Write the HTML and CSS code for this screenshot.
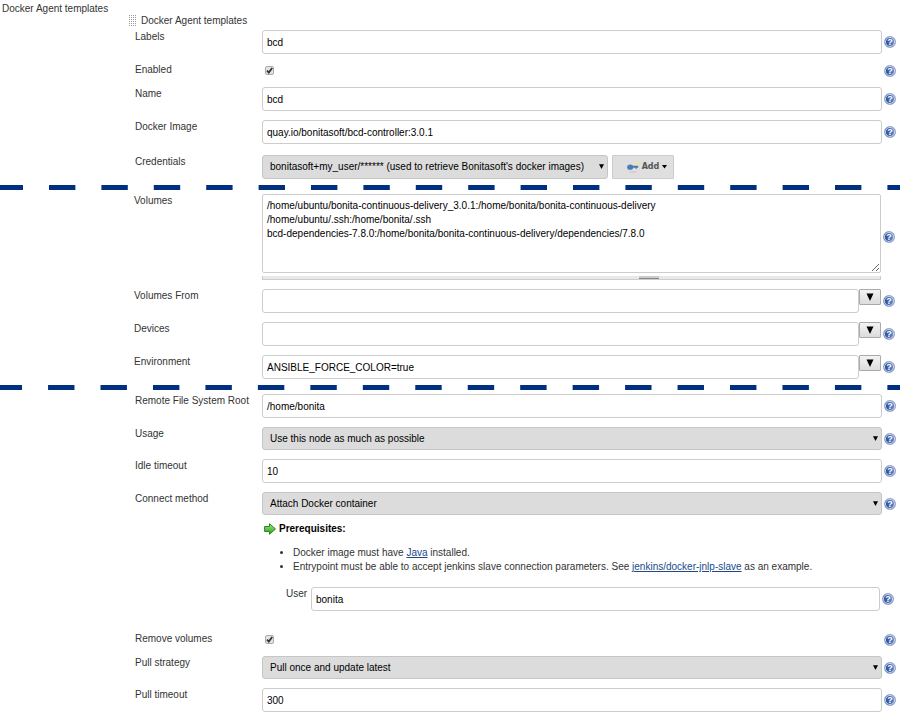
FILE: index.html
```html
<!DOCTYPE html>
<html lang="en">
<head>
<meta charset="utf-8">
<title>Docker Agent templates</title>
<link rel="stylesheet" href="styles.css">
</head>
<body>
<svg class="defs" aria-hidden="true">
  <defs>
    <linearGradient id="green" x1="0" y1="0" x2="0" y2="1"><stop offset="0" stop-color="#a5e67f"/><stop offset="1" stop-color="#2c9b22"/></linearGradient>
  </defs>
  <symbol id="tick" viewBox="0 0 9 9"><path d="M2 4.6 3.8 6.6 7.2 2" fill="none" stroke="#333" stroke-width="1.8"/></symbol>
  <symbol id="arrow" viewBox="0 0 5 5"><path d="M0 0.3H5L2.5 5Z" fill="#000"/></symbol>
  <symbol id="dashes" viewBox="0 0 9000 50" preserveAspectRatio="none"><path d="M0 25H9000" stroke="#00307f" stroke-width="50" stroke-dasharray="264 260" stroke-dashoffset="34"/></symbol>
</svg>

<form class="config">
  <div class="section-name">Docker Agent templates</div>
  <h1 class="template-name"><span class="drag"></span>Docker Agent templates</h1>

  <section class="group">
    <div class="row">
      <label for="labels">Labels</label>
      <input class="text" id="labels" type="text" value="bcd">
      <a class="help" href="#" aria-label="Help">?</a>
    </div>
    <div class="row">
      <label for="enabled">Enabled</label>
      <span class="check"><input id="enabled" type="checkbox" checked><svg><use href="#tick"/></svg></span>
      <a class="help" href="#" aria-label="Help">?</a>
    </div>
    <div class="row">
      <label for="name">Name</label>
      <input class="text" id="name" type="text" value="bcd">
      <a class="help" href="#" aria-label="Help">?</a>
    </div>
    <div class="row">
      <label for="image">Docker Image</label>
      <input class="text" id="image" type="text" value="quay.io/bonitasoft/bcd-controller:3.0.1">
      <a class="help" href="#" aria-label="Help">?</a>
    </div>
    <div class="row credentials">
      <label for="credentials">Credentials</label>
      <div class="inline">
        <span class="select tall"><select id="credentials"><option>bonitasoft+my_user/****** (used to retrieve Bonitasoft's docker images)</option></select><svg><use href="#arrow"/></svg></span>
        <button class="add" type="button">
          <svg class="key" viewBox="0 0 12 12"><ellipse cx="6" cy="11" rx="4.5" ry="0.7" fill="#ccc"/><path d="M7.5 2.2 9 2.6 10.5 1.6V3.2L11.6 4.5H7.5z" fill="#f2ee62"/><ellipse cx="3.2" cy="6.2" rx="3" ry="2.6" fill="#4b79bd"/><path d="M5 4.8h6.2v2H9.8v.9H8.4v-.9H5z" fill="#4b79bd"/></svg>
          Add
          <svg class="caret" viewBox="0 0 5 4"><path d="M0 0H5L2.5 3.5Z" fill="#000"/></svg>
        </button>
      </div>
    </div>
  </section>

  <svg class="divider"><use href="#dashes"/></svg>

  <section class="group shifted">
    <div class="row">
      <label for="volumes">Volumes</label>
      <div class="area">
        <textarea id="volumes">/home/ubuntu/bonita-continuous-delivery_3.0.1:/home/bonita/bonita-continuous-delivery
/home/ubuntu/.ssh:/home/bonita/.ssh
bcd-dependencies-7.8.0:/home/bonita/bonita-continuous-delivery/dependencies/7.8.0</textarea>
        <div class="handle"><span></span></div>
      </div>
      <a class="help" href="#" aria-label="Help">?</a>
    </div>
    <div class="row">
      <label for="from">Volumes From</label>
      <div class="combo"><input class="text" id="from" type="text"><button type="button" aria-label="Expand"><svg viewBox="0 0 8 8"><path d="M0.5 0.5H7.5L4 8Z"/></svg></button></div>
      <a class="help" href="#" aria-label="Help">?</a>
    </div>
    <div class="row">
      <label for="devices">Devices</label>
      <div class="combo"><input class="text" id="devices" type="text"><button type="button" aria-label="Expand"><svg viewBox="0 0 8 8"><path d="M0.5 0.5H7.5L4 8Z"/></svg></button></div>
      <a class="help" href="#" aria-label="Help">?</a>
    </div>
    <div class="row">
      <label for="env">Environment</label>
      <div class="combo"><input class="text" id="env" type="text" value="ANSIBLE_FORCE_COLOR=true"><button type="button" aria-label="Expand"><svg viewBox="0 0 8 8"><path d="M0.5 0.5H7.5L4 8Z"/></svg></button></div>
      <a class="help" href="#" aria-label="Help">?</a>
    </div>
  </section>

  <svg class="divider shifted"><use href="#dashes"/></svg>

  <section class="group">
    <div class="row">
      <label for="root">Remote File System Root</label>
      <input class="text" id="root" type="text" value="/home/bonita">
      <a class="help" href="#" aria-label="Help">?</a>
    </div>
    <div class="row">
      <label for="usage">Usage</label>
      <span class="select"><select id="usage"><option>Use this node as much as possible</option></select><svg><use href="#arrow"/></svg></span>
      <a class="help" href="#" aria-label="Help">?</a>
    </div>
    <div class="row">
      <label for="idle">Idle timeout</label>
      <input class="text" id="idle" type="text" value="10">
      <a class="help" href="#" aria-label="Help">?</a>
    </div>
    <div class="row">
      <label for="connect">Connect method</label>
      <span class="select"><select id="connect"><option>Attach Docker container</option></select><svg><use href="#arrow"/></svg></span>
      <a class="help" href="#" aria-label="Help">?</a>
    </div>
  </section>

  <section class="prerequisites">
    <h2><svg viewBox="0 0 12 12"><path d="M0.6 3.5H5.5V0.7L11.5 6L5.5 11.3V8.5H0.6Z" fill="url(#green)" stroke="#23891f"/></svg>Prerequisites:</h2>
    <ul>
      <li>Docker image must have <a href="#">Java</a> installed.</li>
      <li>Entrypoint must be able to accept jenkins slave connection parameters. See <a href="#">jenkins/docker-jnlp-slave</a> as an example.</li>
    </ul>
    <div class="row user">
      <label for="user">User</label>
      <input class="text" id="user" type="text" value="bonita">
      <a class="help" href="#" aria-label="Help">?</a>
    </div>
  </section>

  <section class="group">
    <div class="row">
      <label for="remove">Remove volumes</label>
      <span class="check"><input id="remove" type="checkbox" checked><svg><use href="#tick"/></svg></span>
      <a class="help" href="#" aria-label="Help">?</a>
    </div>
    <div class="row">
      <label for="strategy">Pull strategy</label>
      <span class="select"><select id="strategy"><option>Pull once and update latest</option></select><svg><use href="#arrow"/></svg></span>
      <a class="help" href="#" aria-label="Help">?</a>
    </div>
    <div class="row">
      <label for="timeout">Pull timeout</label>
      <input class="text" id="timeout" type="text" value="300">
      <a class="help" href="#" aria-label="Help">?</a>
    </div>
  </section>
</form>
</body>
</html>
```
FILE: styles.css
```css
* { box-sizing: border-box; }
body { margin: 0; background: #fff; }
body, input, select, textarea, button {
  font-family: "Liberation Sans", Arial, sans-serif;
  font-size: 10px;
  line-height: 14px;
}
body { color: #333; }
svg { display: block; }
.defs { position: absolute; width: 0; height: 0; }

.section-name { padding: 2px 0 0 2px; line-height: 14px; height: 14px; }
.template-name {
  display: flex;
  align-items: center;
  gap: 5px;
  margin: 0 0 3px 128px;
  height: 13px;
  font-size: 10px;
  font-weight: normal;
}
.drag {
  width: 8px;
  height: 12px;
  background: repeating-conic-gradient(#999 0 25%, #fff 0 100%) 0 0 / 2px 2px;
}

.group { display: flex; flex-direction: column; gap: 9px; padding: 0 4px 0 135px; }
.group.shifted { padding: 0 5px 0 134px; }
.row {
  display: grid;
  grid-template-columns: 127px minmax(0, 1fr) 14px;
  align-items: center;
}
.shifted .row { grid-template-columns: 128px minmax(0, 1fr) 14px; }
.row > label { align-self: start; }
.help {
  display: block;
  width: 12px;
  height: 12px;
  margin-left: 2px;
  border: 1px solid #8fa5d2;
  border-radius: 50%;
  background: linear-gradient(90deg, #23468f, #6f90cc);
  box-shadow: inset 0 0 0 1px #d5def0;
  color: #fff;
  font-size: 9px;
  font-weight: bold;
  line-height: 10px;
  text-align: center;
  text-decoration: none;
}

.text {
  width: 100%;
  height: 24px;
  padding: 0 4px;
  border: 1px solid #ccc;
  border-radius: 3px;
  background: #fff;
  color: #000;
}
.check { position: relative; display: block; height: 15px; padding: 3px; }
.check input {
  appearance: none;
  display: block;
  width: 9px;
  height: 9px;
  margin: 0;
  border: 1px solid #aaa;
  border-radius: 2px;
  background: #e4e4e4;
}
.check svg { position: absolute; top: 3px; left: 3px; width: 9px; height: 9px; pointer-events: none; }

.select { position: relative; display: block; }
.select select {
  appearance: none;
  display: block;
  width: 100%;
  height: 23px;
  padding: 0 16px 0 7px;
  border: 1px solid #c6c6c6;
  border-radius: 3px;
  background: #dcdcdc;
  color: #000;
}
.select.tall select { height: 24px; }
.select svg { position: absolute; right: 4px; top: 9px; width: 5px; height: 5px; pointer-events: none; }

.credentials { padding-top: 2px; }
.inline { display: flex; gap: 4px; }
.inline .select { width: 346px; }
.add {
  display: flex;
  align-items: center;
  justify-content: center;
  gap: 3px;
  width: 62px;
  height: 24px;
  padding: 0 0 0 8px;
  border: 1px solid #ccc;
  border-radius: 1px;
  background: #dfdfdf;
  color: #555;
  font-family: "DejaVu Sans", sans-serif;
  font-size: 8px;
  font-weight: bold;
}
.key { width: 12px; height: 12px; }
.caret { width: 5px; height: 4px; }

.divider { width: 100%; height: 5px; margin: 6px 0 4px; }
.divider.shifted { margin-left: -1px; }
.divider.shifted { width: calc(100% + 1px); }
.divider use { width: 100%; height: 100%; }

.area textarea {
  display: block;
  width: 100%;
  height: 79px;
  padding: 4px;
  border: 1px solid #ccc;
  border-radius: 2px;
  color: #000;
  resize: vertical;
}
.handle { height: 4px; margin-top: 3px; background: #e9e9e9; border: 1px solid #ccc; border-top: 0; }
.handle span { display: block; width: 20px; height: 3px; margin-left: 61%; background: #ccc; border-bottom: 1px solid #888; }

.combo { display: flex; align-items: flex-start; }
.combo .text { flex: 1; min-width: 0; }
.combo button {
  display: flex;
  align-items: center;
  justify-content: center;
  width: 22px;
  height: 16px;
  padding: 0;
  border: 1px solid #aaa;
  border-radius: 1px;
  background: linear-gradient(#f3f3f3, #dcdcdc);
}
.combo button svg { width: 8px; height: 8px; }

.prerequisites { padding: 7px 6px 21px 264px; }
.prerequisites h2 {
  display: flex;
  align-items: center;
  gap: 3px;
  margin: 0 0 10px;
  color: #000;
  font-size: 10px;
}
.prerequisites h2 svg { width: 12px; height: 12px; }
.prerequisites ul { margin: 0 0 13px; padding-left: 29px; }
.prerequisites li a { color: #204a87; }
.prerequisites .user { grid-template-columns: 25px minmax(0, 1fr) 14px; margin-left: 22px; }
```
